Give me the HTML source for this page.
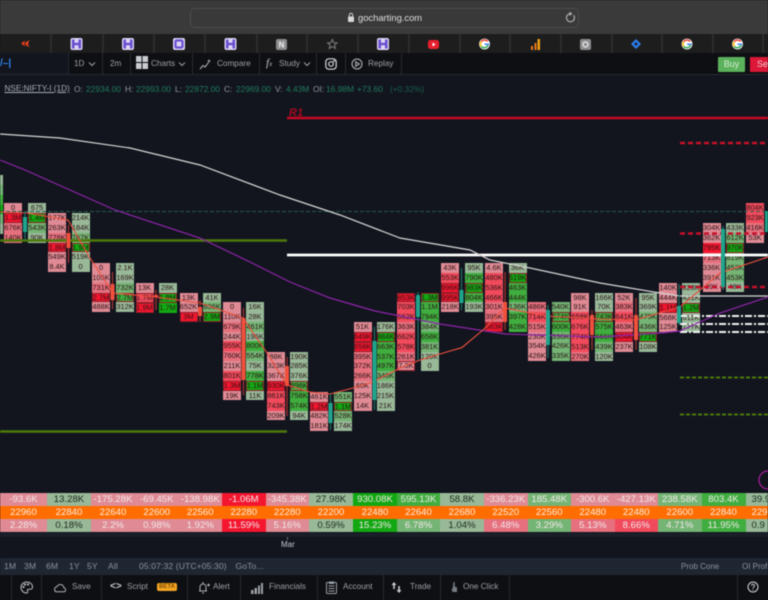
<!DOCTYPE html>
<html><head><meta charset="utf-8"><title>GoCharting</title>
<style>
html,body{margin:0;padding:0;background:#12151e}
#w{position:relative;width:768px;height:600px;overflow:hidden;background:#12151e;font-family:"Liberation Sans",sans-serif;filter:blur(.42px)}
.a{position:absolute;white-space:nowrap}
.c{position:absolute;width:18px}
.c i{display:block;height:9.85px;line-height:9.85px;font-style:normal;font-size:7.4px;text-align:center;color:#2a1414;box-sizing:border-box}
.r1{background:#df8a94}.r2{background:#e6707e}.r3{background:#f04a5c}.r4{background:#f4152f}
.g1{background:#98b898}.g2{background:#74b474}.g3{background:#3fae3f}.g4{background:#12a812}
.c i.b{box-shadow:inset 0 0 0 1px #8f1f2a}
.tab{position:absolute;top:34px;width:2px;height:19px;background:#2c2c2c}
.sep{position:absolute;top:53px;width:1px;height:22px;background:#272a31}
.sp2{position:absolute;top:575px;width:1px;height:25px;background:#272a31}
.t{font-size:8.2px;color:#9aa0a8;line-height:11px}
.b1{font-size:8.6px;color:#8c93a0;line-height:11px;letter-spacing:.1px}
.tc{position:absolute;height:13px;line-height:13px;font-size:9.6px;text-align:center;color:#f3e8ea;white-space:nowrap;overflow:hidden}
.d{color:#1c2a1c}
.o{background:#ff6d00;color:#fbeee2}
.gl,.gr{position:absolute;top:83px;line-height:12px;white-space:nowrap;font-size:8.4px}
.gl{color:#1f7a5c}
.gr{color:#8f959e}
</style></head><body><div id="w">

<!-- browser chrome -->
<div class="a" style="left:0;top:0;width:768px;height:34px;background:#3a3a3a"></div>
<div class="a" style="left:190px;top:8px;width:387px;height:18px;background:#393939;border:1px solid #4c4c4c;border-radius:5px"></div>
<svg class="a" style="left:347px;top:12px" width="8" height="11"><rect x="1" y="4.500" width="6" height="5.500" rx="1" fill="#d8d8d8"/><path d="M2.300 4.500V3a1.700 1.700 0 0 1 3.400 0v1.500" fill="none" stroke="#d8d8d8"/></svg>
<div class="a" style="left:358px;top:11px;font-size:9.4px;line-height:13px;color:#dedede">gocharting.com</div>
<svg class="a" style="left:565px;top:12px" width="11" height="11" fill="none" stroke="#bdbdbd" stroke-width="1"><path d="M8.600 3.200A4 4 0 1 1 5.500 1.700"/><path d="M4.500 0 6.500 1.700 4.500 3.400"/></svg>

<!-- tabs -->
<div class="a" style="left:0;top:34px;width:768px;height:19px;background:#1d1d1e"></div>
<div class="tab" style="left:50px"></div><div class="tab" style="left:102px"></div><div class="tab" style="left:153px"></div><div class="tab" style="left:204px"></div><div class="tab" style="left:256px"></div><div class="tab" style="left:306px"></div><div class="tab" style="left:357px"></div><div class="tab" style="left:408px"></div><div class="tab" style="left:459px"></div><div class="tab" style="left:509px"></div><div class="tab" style="left:560px"></div><div class="tab" style="left:611px"></div><div class="tab" style="left:661px"></div><div class="tab" style="left:712px"></div><div class="tab" style="left:762px"></div>
<svg class="a" style="left:0;top:34px" width="768" height="19">
<defs>
<g id="h"><rect x="-6" y="-6" width="12" height="12" rx="2" fill="#dcd6f4"/><path d="M-3.300-4.500V4.500M3.300-4.500V4.500M-3.300 0H3.300" stroke="#6a4fd0" stroke-width="2.600" fill="none"/></g>
<g id="gg"><circle r="5.400" fill="#fff"/><path d="M3.200-2.400A4 4 0 0 0-3.300-2.200" stroke="#ea4335" stroke-width="1.500" fill="none"/><path d="M-3.300-2.200A4 4 0 0 0-3.200 2.400" stroke="#fbbc05" stroke-width="1.500" fill="none"/><path d="M-3.200 2.400A4 4 0 0 0 3.600 1" stroke="#34a853" stroke-width="1.500" fill="none"/><path d="M0 .2H3.800V1.200" stroke="#4285f4" stroke-width="1.500" fill="none"/></g>
</defs>
<path d="M29.500 6 24 9.500l2 .5-1 .5 4.500 3-1.500-3.500z" fill="#e8401c"/><path d="M21 9.500l4-3-1 3 1 3z" fill="#e8401c"/>
<use href="#h" x="76.500" y="10"/><use href="#h" x="128" y="10"/>
<rect x="173" y="4" width="12" height="12" rx="2" fill="#dcd6f4"/><rect x="175.500" y="6.500" width="7" height="7" rx="1" fill="none" stroke="#6a4fd0" stroke-width="2.200"/>
<use href="#h" x="230.500" y="10"/>
<rect x="276" y="5" width="11" height="11" rx="2" fill="#8d8d8f"/><text x="281.500" y="13.500" font-size="8" font-weight="bold" text-anchor="middle" fill="#eee" font-family="Liberation Sans">N</text>
<path d="M332.300 5.500l1.400 3.100 3.300.3-2.500 2.200.8 3.300-3-1.800-3 1.800.8-3.300-2.500-2.200 3.300-.3z" fill="none" stroke="#7f7f7f"/>
<use href="#h" x="383" y="10"/>
<rect x="428" y="6" width="11" height="9" rx="2.500" fill="#e8202e"/><path d="M432.500 8.500v4l3-2z" fill="#fff"/>
<use href="#gg" x="484.500" y="10"/>
<rect x="531" y="12" width="2" height="4" fill="#e8781c"/><rect x="534.500" y="9" width="2" height="7" fill="#e8781c"/><rect x="537.500" y="5" width="2.500" height="11" fill="#f0a010"/>
<rect x="580" y="5" width="11" height="11" rx="2" fill="#8d8d8f"/><circle cx="585.500" cy="10.500" r="2.500" fill="none" stroke="#eee" stroke-width="1.200"/>
<path d="M636 5l5 5-5 5-5-5z" fill="#2f7fe8"/><path d="M636 8l2 2-2 2-2-2z" fill="#16254a"/>
<use href="#gg" x="687" y="10"/><use href="#gg" x="737.500" y="10"/>
</svg>

<!-- toolbar -->
<div class="a" style="left:0;top:53px;width:768px;height:22px;background:#0e0f12;border-bottom:1px solid #272a31;box-sizing:border-box"></div>
<div class="a" style="left:0;top:53px;width:68px;height:22px;background:#12151e;border-bottom:1px solid #272a31;box-sizing:border-box"></div>
<div class="a" style="left:0;top:57px;font-size:10px;font-weight:bold;color:#2f83f0;line-height:14px">/&#8211;|</div>
<div class="sep" style="left:68px"></div><div class="sep" style="left:102px"></div><div class="sep" style="left:130px"></div><div class="sep" style="left:192px"></div><div class="sep" style="left:259px"></div><div class="sep" style="left:316px"></div><div class="sep" style="left:345px"></div><div class="sep" style="left:401px"></div>
<div class="a t" style="left:74px;top:58px">1D</div>
<svg class="a" style="left:88px;top:61px" width="8" height="6" fill="none" stroke="#9aa0a8"><path d="M1 1.500 4 4.500 7 1.500"/></svg>
<div class="a t" style="left:110px;top:58px">2m</div>
<svg class="a" style="left:136px;top:56px" width="12" height="13" fill="#c9cdd2"><rect width="5.500" height="6"/><rect x="6.500" width="5.500" height="6"/><rect y="7" width="5.500" height="6"/><rect x="6.500" y="7" width="5.500" height="6"/></svg>
<div class="a t" style="left:151px;top:58px">Charts</div>
<svg class="a" style="left:178px;top:61px" width="8" height="6" fill="none" stroke="#9aa0a8"><path d="M1 1.500 4 4.500 7 1.500"/></svg>
<svg class="a" style="left:199px;top:59px" width="12" height="12" fill="none" stroke="#b8bcc2"><path d="M1 10 4 6.500 6 8 9.500 3.500"/><path d="M10 0.500v3M8.500 2h3" stroke-width=".8"/></svg>
<div class="a t" style="left:217px;top:58px">Compare</div>
<div class="a" style="left:266px;top:57px;font-family:'Liberation Serif',serif;font-style:italic;font-size:11px;color:#c0c4ca;line-height:13px">f<span style="font-size:7px">x</span></div>
<div class="a t" style="left:279px;top:58px">Study</div>
<svg class="a" style="left:303px;top:61px" width="8" height="6" fill="none" stroke="#9aa0a8"><path d="M1 1.500 4 4.500 7 1.500"/></svg>
<svg class="a" style="left:325px;top:58px" width="12" height="12" fill="none" stroke="#d5d7da" stroke-width="1.200"><rect x=".8" y=".8" width="10.400" height="10.400" rx="3"/><circle cx="6" cy="6" r="2.300"/><circle cx="9" cy="3" r=".4"/></svg>
<svg class="a" style="left:351px;top:58px" width="12" height="12" fill="none" stroke="#b8bcc2"><circle cx="6" cy="6" r="5"/><path d="M4.700 3.700v4.600L8.300 6z"/></svg>
<div class="a t" style="left:368px;top:58px">Replay</div>
<div class="a" style="left:718px;top:57px;width:27px;height:15px;border-radius:1px;background:#5cb25c;color:#d4ecd4;font-size:9px;line-height:15px;text-align:center">Buy</div>
<div class="a" style="left:750px;top:57px;width:18px;height:15px;background:#dc1838;color:#f2c8d0;font-size:9px;line-height:15px;overflow:hidden;padding-left:7px;box-sizing:border-box">Sell</div>

<!-- legend -->
<div class="a" style="left:4.500px;top:83px;font-size:8.200px;line-height:12px;color:#a8adb4;text-decoration:underline">NSE:NIFTY-I (1D)</div>
<span class="gr" style="left:74px">O:</span><span class="gl" style="left:86px">22934.00</span>
<span class="gr" style="left:125px">H:</span><span class="gl" style="left:136px">22993.00</span>
<span class="gr" style="left:175px">L:</span><span class="gl" style="left:185px">22872.00</span>
<span class="gr" style="left:224px">C:</span><span class="gl" style="left:236px">22969.00</span>
<span class="gr" style="left:275px">V:</span><span class="gl" style="left:286px">4.43M</span>
<span class="gr" style="left:313px">OI:</span><span class="gl" style="left:326px">16.98M</span>
<span class="gl" style="left:357px">+73.60</span><span class="gl" style="left:390px;color:#17604a">(+0.32%)</span>

<!-- cells -->
<div class="c" style="left:-15px;top:175px"><i class="g1"></i><i class="g2"></i><i class="g3"></i><i class="g4"></i><i class="g2"></i><i class="g1"></i></div>
<div class="c" style="left:4px;top:203.300px"><i class="r1">0</i><i class="r4 b">1.3M</i><i class="r2">676K</i><i class="r2">140K</i></div>
<div class="c" style="left:28px;top:203.300px"><i class="g1">675</i><i class="g4 b">1.4M</i><i class="g2">543K</i><i class="g1">90K</i></div>
<div class="c" style="left:48px;top:213px"><i class="r1">177K</i><i class="r1">263K</i><i class="r2">778K</i><i class="r4 b">1.8M</i><i class="r1">549K</i><i class="r1">8.4K</i></div>
<div class="c" style="left:71.500px;top:213px"><i class="g1">214K</i><i class="g1">184K</i><i class="g2">767K</i><i class="g4 b">1.9M</i><i class="g1">519K</i><i class="g1">0</i></div>
<div class="c" style="left:92px;top:263px"><i class="r1">0</i><i class="r1">105K</i><i class="r2">731K</i><i class="r4 b">2.7M</i><i class="r1">488K</i></div>
<div class="c" style="left:116px;top:263px"><i class="g1">2.1K</i><i class="g1">169K</i><i class="g2">732K</i><i class="g3 b">2.7M</i><i class="g1">312K</i></div>
<div class="c" style="left:135.500px;top:283px"><i class="r1">13K</i><i class="r3 b">1.7M</i><i class="r4 b">1.9M</i></div>
<div class="c" style="left:158.500px;top:283px"><i class="g1">28K</i><i class="g4 b">1.8M</i><i class="g4">1.7M</i></div>
<div class="c" style="left:179.500px;top:292.500px"><i class="r1">13K</i><i class="r1">652K</i><i class="r4 b">3M</i></div>
<div class="c" style="left:203px;top:292.500px"><i class="g1">41K</i><i class="g2">636K</i><i class="g4 b">2.9M</i></div>
<div class="c" style="left:223px;top:302px"><i class="r1">0</i><i class="r1">110K</i><i class="r2">679K</i><i class="r1">244K</i><i class="r3">955K</i><i class="r2">760K</i><i class="r1">211K</i><i class="r3">801K</i><i class="r4 b">1.3M</i><i class="r1">19K</i></div>
<div class="c" style="left:246px;top:302px"><i class="g1">16K</i><i class="g1">28K</i><i class="g2">461K</i><i class="g1">196K</i><i class="g3">800K</i><i class="g2">554K</i><i class="g1">75K</i><i class="g3">778K</i><i class="g4 b">1.1M</i><i class="g1">11K</i></div>
<div class="c" style="left:267px;top:351.500px"><i class="r1">88K</i><i class="r1">323K</i><i class="r1">367K</i><i class="r4 b">930K</i><i class="r3">861K</i><i class="r3">743K</i><i class="r1">209K</i></div>
<div class="c" style="left:290px;top:351.500px"><i class="g1">190K</i><i class="g1">285K</i><i class="g1">376K</i><i class="g3 b">898K</i><i class="g3">758K</i><i class="g3">574K</i><i class="g1">94K</i></div>
<div class="c" style="left:310px;top:391.700px"><i class="r1">461K</i><i class="r4 b">1.2M</i><i class="r1">482K</i><i class="r1">181K</i></div>
<div class="c" style="left:334px;top:391.700px"><i class="g2">551K</i><i class="g4 b">1.1M</i><i class="g2">528K</i><i class="g1">174K</i></div>
<div class="c" style="left:353.500px;top:322px"><i class="r1">51K</i><i class="r4 b">649K</i><i class="r4 b">658K</i><i class="r2">395K</i><i class="r2">372K</i><i class="r2">266K</i><i class="r1">60K</i><i class="r1">125K</i><i class="r1">14K</i></div>
<div class="c" style="left:376.500px;top:322px"><i class="g1">176K</i><i class="g4 b">884K</i><i class="g3">663K</i><i class="g3">537K</i><i class="g3">497K</i><i class="g2">346K</i><i class="g1">186K</i><i class="g1">215K</i><i class="g1">21K</i></div>
<div class="c" style="left:397px;top:292.500px"><i class="r4 b">853K</i><i class="r3">703K</i><i class="r3">662K</i><i class="r2">363K</i><i class="r3">662K</i><i class="r3">578K</i><i class="r2">261K</i><i class="r1 b">7.3K</i></div>
<div class="c" style="left:420.500px;top:292.500px"><i class="g4 b">1.3M</i><i class="g3">1.1M</i><i class="g3">794K</i><i class="g2">384K</i><i class="g3">658K</i><i class="g2">381K</i><i class="g1">129K</i><i class="g1">0</i></div>
<div class="c" style="left:441px;top:263px"><i class="r1">43K</i><i class="r3">553K</i><i class="r4 b">996K</i><i class="r4 b">995K</i><i class="r1">218K</i></div>
<div class="c" style="left:465px;top:263px"><i class="g1">95K</i><i class="g3">790K</i><i class="g4 b">983K</i><i class="g3">804K</i><i class="g1">193K</i></div>
<div class="c" style="left:485px;top:263px"><i class="r1">4.6K</i><i class="r3">480K</i><i class="r3">536K</i><i class="r3">466K</i><i class="r2">301K</i><i class="r2">395K</i><i class="r4 b">583K</i></div>
<div class="c" style="left:508.500px;top:263px"><i class="g1">36K</i><i class="g4 b">519K</i><i class="g3">463K</i><i class="g3">444K</i><i class="g2">136K</i><i class="g3">397K</i><i class="g3">428K</i></div>
<div class="c" style="left:528px;top:302px"><i class="r2">486K</i><i class="r3">714K</i><i class="r2">515K</i><i class="r1">230K</i><i class="r1">354K</i><i class="r1">426K</i></div>
<div class="c" style="left:551.500px;top:302px"><i class="g2">540K</i><i class="g3 b">674K</i><i class="g3">600K</i><i class="g2">336K</i><i class="g2">426K</i><i class="g2">335K</i></div>
<div class="c" style="left:571px;top:292.500px"><i class="r1">98K</i><i class="r1">91K</i><i class="r3">658K</i><i class="r3">676K</i><i class="r3">774K</i><i class="r3">513K</i><i class="r2">270K</i></div>
<div class="c" style="left:595px;top:292.500px"><i class="g1">166K</i><i class="g1">70K</i><i class="g3 b">743K</i><i class="g3">575K</i><i class="g3">666K</i><i class="g2">439K</i><i class="g1">120K</i></div>
<div class="c" style="left:615px;top:292.500px"><i class="r1">52K</i><i class="r2">383K</i><i class="r3">641K</i><i class="r2">463K</i><i class="r4 b">904K</i><i class="r1">237K</i></div>
<div class="c" style="left:639px;top:292.500px"><i class="g1">95K</i><i class="g1">369K</i><i class="g2">475K</i><i class="g2">436K</i><i class="g4 b">771K</i><i class="g1">108K</i></div>
<div class="c" style="left:659px;top:283px"><i class="r1">140K</i><i class="r1">444K</i><i class="r4 b">1.1M</i><i class="r1">568K</i><i class="r1">125K</i></div>
<div class="c" style="left:682px;top:283px"><i class="g1">328K</i><i class="g1">421K</i><i class="g4 b">1.2M</i><i class="g1">611K</i><i class="g1">777K</i></div>
<div class="c" style="left:702.500px;top:223.300px"><i class="r1">304K</i><i class="r1">362K</i><i class="r4">795K</i><i class="r2">713K</i><i class="r1">336K</i><i class="r1">391K</i><i class="r1">89K</i></div>
<div class="c" style="left:726px;top:223.300px"><i class="g1">433K</i><i class="g2">612K</i><i class="g4 b">970K</i><i class="g2">819K</i><i class="g2">453K</i><i class="g2">453K</i><i class="g1">48K</i></div>
<div class="c" style="left:746px;top:203.300px"><i class="r3">804K</i><i class="r3">923K</i><i class="r2">416K</i><i class="r1">53K</i></div>

<!-- chart overlay -->
<svg class="a" style="left:0;top:0" width="768" height="600">
<g fill="none">
<path d="M0 211.500H768" stroke="#245c50" stroke-dasharray="4 2"/>
<path d="M287 118H768" stroke="#c80a24" stroke-width="2.600"/>
<path d="M0 240.500H287" stroke="#4d7a0a" stroke-width="2.600"/>
<path d="M0 431.500H287" stroke="#4d7a0a" stroke-width="2.600"/>
<path d="M287 255H768" stroke="#fff" stroke-width="2.800"/>
<path d="M680 143H768M680 233.500H768M680 287H768" stroke="#c80f2c" stroke-width="2.400" stroke-dasharray="5 3"/>
<path d="M680 316H768M680 324H768M680 332H768" stroke="#f2f2f2" stroke-width="2" stroke-dasharray="7 2 2 2"/>
<path d="M680 377.500H768M680 414.500H768" stroke="#4d7a0a" stroke-width="2" stroke-dasharray="4 2"/>
<path d="M0 134 60 138 130 148 200 165 280 195 340 215 400 238 470 250 490 260 530 268 600 283 660 293 680 296H768" stroke="#d6d6d6" stroke-width="1.200"/>
<path d="M0 160 25 170 115 210 200 238 250 262 290 282 330 298 375 311 440 324 505 334 600 337 660 333 680 331 720 313 768 297" stroke="#8e24aa" stroke-width="1.200"/>
<path d="M0 212 27 213 68 220 90 258 113 293 155 297 200 303 243 318 267 353 287 385 310 392 330 394 353 388 373 382 400 368 420 360 450 351 461.700 347.700 483 330 505 308 546 316 600 319 635 320 680 307 720 273 768 257" stroke="#f0503c" stroke-width="1.100"/>
</g>
<!-- wicks -->
<g stroke-width="1.200">
<path d="M25 212V240M330.500 394V430M374.500 327V410M418 292V360M461.500 268V310M548 305V358M679 284V325M723 226V290" stroke="#1f6f62"/>
<path d="M68.500 225V263M112.500 272V309M156 290V310M200 300V322M243.500 308V395M287 357V416M505 272V330M592 310V350M636 298V350" stroke="#a83230"/>
</g>
<!-- candle bodies -->
<g fill="#1fa58c">
<rect x="23" y="217" width="4" height="15"/><rect x="328.500" y="403" width="4" height="20"/><rect x="372.500" y="341" width="4" height="59"/><rect x="416" y="295" width="4" height="22"/><rect x="459.500" y="290" width="4" height="13"/><rect x="546" y="310" width="4" height="35"/><rect x="677" y="306" width="4" height="17"/><rect x="721" y="229" width="4" height="58"/><rect x="765" y="211" width="4" height="21"/>
</g>
<g fill="#f0503c">
<rect x="66.500" y="233" width="4" height="15"/><rect x="110.500" y="284" width="4" height="16"/><rect x="154" y="295" width="4" height="2"/><rect x="198" y="307" width="4" height="9"/><rect x="241.500" y="318" width="4" height="62"/><rect x="285" y="366" width="4" height="20"/><rect x="503" y="302" width="4" height="20"/><rect x="590" y="315" width="4" height="20"/><rect x="634" y="315" width="4" height="25"/>
</g>
<circle cx="768" cy="480" r="9" fill="none" stroke="#b01ca0" stroke-width="1.200"/>
<circle cx="766" cy="506" r="3" fill="#6a6a6a"/>
</svg>
<div class="a" style="left:289px;top:107px;font-size:11px;line-height:13px;font-weight:bold;font-style:italic;color:#a80a20">R1</div>

<!-- bottom table -->
<div class="a" style="left:0;top:493px;width:768px;height:39px;background:#ff6d00"></div>
<div class="tc r1" style="left:0;top:493px;width:47px">-93.6K</div><div class="tc g1 d" style="left:47px;top:493px;width:44px">13.28K</div><div class="tc r1" style="left:91px;top:493px;width:44px">-175.28K</div><div class="tc r1" style="left:135px;top:493px;width:43.500px">-69.45K</div><div class="tc r1" style="left:178.500px;top:493px;width:43.500px">-138.98K</div><div class="tc r4" style="left:222px;top:493px;width:43.500px">-1.06M</div><div class="tc r1" style="left:265.500px;top:493px;width:43.500px">-345.38K</div><div class="tc g1 d" style="left:309px;top:493px;width:44px">27.98K</div><div class="tc g4" style="left:353px;top:493px;width:44px">930.08K</div><div class="tc g3" style="left:397px;top:493px;width:43px">595.13K</div><div class="tc g1 d" style="left:440px;top:493px;width:44px">58.8K</div><div class="tc r1" style="left:484px;top:493px;width:43.500px">-336.23K</div><div class="tc g2" style="left:527.500px;top:493px;width:43.500px">185.48K</div><div class="tc r1" style="left:571px;top:493px;width:43.500px">-300.6K</div><div class="tc r1" style="left:614.500px;top:493px;width:43.500px">-427.13K</div><div class="tc g2" style="left:658px;top:493px;width:43.500px">238.58K</div><div class="tc g3" style="left:701.500px;top:493px;width:44px">803.4K</div><div class="tc g1 d" style="left:745.500px;top:493px;width:23px;text-align:left;padding-left:6px;box-sizing:border-box">39.9</div>
<div class="tc o" style="left:0;top:506px;width:47px">22960</div><div class="tc o" style="left:47px;top:506px;width:44px">22840</div><div class="tc o" style="left:91px;top:506px;width:44px">22640</div><div class="tc o" style="left:135px;top:506px;width:43.500px">22600</div><div class="tc o" style="left:178.500px;top:506px;width:43.500px">22560</div><div class="tc o" style="left:222px;top:506px;width:43.500px">22280</div><div class="tc o" style="left:265.500px;top:506px;width:43.500px">22280</div><div class="tc o" style="left:309px;top:506px;width:44px">22200</div><div class="tc o" style="left:353px;top:506px;width:44px">22480</div><div class="tc o" style="left:397px;top:506px;width:43px">22640</div><div class="tc o" style="left:440px;top:506px;width:44px">22680</div><div class="tc o" style="left:484px;top:506px;width:43.500px">22520</div><div class="tc o" style="left:527.500px;top:506px;width:43.500px">22560</div><div class="tc o" style="left:571px;top:506px;width:43.500px">22480</div><div class="tc o" style="left:614.500px;top:506px;width:43.500px">22480</div><div class="tc o" style="left:658px;top:506px;width:43.500px">22600</div><div class="tc o" style="left:701.500px;top:506px;width:44px">22840</div><div class="tc o" style="left:745.500px;top:506px;width:23px;text-align:left;padding-left:6px;box-sizing:border-box">229</div>
<div class="tc r1" style="left:0;top:519px;width:47px">2.28%</div><div class="tc g1 d" style="left:47px;top:519px;width:44px">0.18%</div><div class="tc r1" style="left:91px;top:519px;width:44px">2.2%</div><div class="tc r1" style="left:135px;top:519px;width:43.500px">0.98%</div><div class="tc r1" style="left:178.500px;top:519px;width:43.500px">1.92%</div><div class="tc r4" style="left:222px;top:519px;width:43.500px">11.59%</div><div class="tc r1" style="left:265.500px;top:519px;width:43.500px">5.16%</div><div class="tc g1 d" style="left:309px;top:519px;width:44px">0.59%</div><div class="tc g4" style="left:353px;top:519px;width:44px">15.23%</div><div class="tc g2" style="left:397px;top:519px;width:43px">6.78%</div><div class="tc g1 d" style="left:440px;top:519px;width:44px">1.04%</div><div class="tc r2" style="left:484px;top:519px;width:43.500px">6.48%</div><div class="tc g2" style="left:527.500px;top:519px;width:43.500px">3.29%</div><div class="tc r2" style="left:571px;top:519px;width:43.500px">5.13%</div><div class="tc r3" style="left:614.500px;top:519px;width:43.500px">8.66%</div><div class="tc g2" style="left:658px;top:519px;width:43.500px">4.71%</div><div class="tc g3" style="left:701.500px;top:519px;width:44px">11.95%</div><div class="tc g1 d" style="left:745.500px;top:519px;width:23px;text-align:left;padding-left:6px;box-sizing:border-box">0.9</div>
<div class="a" style="left:0;top:533px;width:768px;height:4px;background:#1a1e28"></div>

<!-- axis -->
<div class="a" style="left:287px;top:537px;width:1px;height:3px;background:#6a707a"></div>
<div class="a" style="left:281px;top:539px;font-size:8px;line-height:11px;color:#c4c8ce">Mar</div>

<!-- range bar -->
<div class="a" style="left:0;top:558px;width:768px;height:17px;background:#1f2632"></div>
<div class="a b1" style="left:4px;top:561px">1M</div><div class="a b1" style="left:24px;top:561px">3M</div><div class="a b1" style="left:46px;top:561px">6M</div><div class="a b1" style="left:69px;top:561px">1Y</div><div class="a b1" style="left:87px;top:561px">5Y</div><div class="a b1" style="left:108px;top:561px">All</div>
<div class="a b1" style="left:139px;top:561px">05:07:32 (UTC+05:30)</div><div class="a b1" style="left:235.500px;top:561px">GoTo...</div>
<div class="a b1" style="left:681px;top:561px;font-size:8px;letter-spacing:0">Prob Cone</div><div class="a b1" style="left:742px;top:561px;font-size:8px;letter-spacing:0">OI Profile</div>

<!-- bottom bar -->
<div class="a" style="left:0;top:575px;width:768px;height:25px;background:#0e0f12"></div>
<div class="sp2" style="left:11px"></div><div class="sp2" style="left:41px"></div><div class="sp2" style="left:101px"></div><div class="sp2" style="left:187px"></div><div class="sp2" style="left:240px"></div><div class="sp2" style="left:317px"></div><div class="sp2" style="left:383px"></div><div class="sp2" style="left:440px"></div><div class="sp2" style="left:509px"></div><div class="sp2" style="left:737px"></div>
<svg class="a" style="left:20px;top:581px" width="13" height="13" fill="none" stroke="#b8bcc2"><path d="M6.500 1a5.500 5.500 0 1 0 0 11c1.500 0 1.500-1.200 1-2s0-1.800 1.200-1.800H10.500c1.200 0 2-1 2-2.200C12.500 3 10 1 6.500 1z"/><circle cx="3.500" cy="6" r=".6"/><circle cx="5" cy="3.500" r=".6"/><circle cx="8" cy="3.500" r=".6"/></svg>
<svg class="a" style="left:53px;top:583px" width="13" height="10" fill="none" stroke="#aeb2b8"><path d="M3.200 8.800H10.500a2 2 0 0 0 .3-4A3.500 3.500 0 0 0 4 3.800a2.600 2.600 0 0 0-.8 5z"/></svg>
<div class="a t" style="left:72px;top:581px">Save</div>
<div class="a" style="left:110px;top:580px;font-size:10px;line-height:13px;color:#c8ccd0;font-weight:bold">&lt;&gt;</div>
<div class="a t" style="left:127px;top:581px">Script</div>
<div class="a" style="left:157px;top:583px;width:20px;height:8px;border-radius:2px;background:#f5a623;color:#7a4e00;font-size:6px;font-weight:bold;line-height:8px;text-align:center">BETA</div>
<svg class="a" style="left:197px;top:581px" width="13" height="13" fill="none" stroke="#aeb2b8"><path d="M2 10h8M3 10V6a3 3 0 0 1 6 0v4M6 1v2M5 12h2M10 4h3M11.500 2.500v3"/></svg>
<div class="a t" style="left:213px;top:581px">Alert</div>
<svg class="a" style="left:251px;top:582px" width="12" height="12" fill="#9aa0a8"><rect x="0" y="8" width="2.500" height="4"/><rect x="3.500" y="6" width="2.500" height="6"/><rect x="7" y="3.500" width="2" height="8.500"/><rect x="10" y="1" width="2" height="11"/></svg>
<div class="a t" style="left:269px;top:581px">Financials</div>
<svg class="a" style="left:326px;top:581px" width="11" height="13" fill="none" stroke="#9aa0a8"><rect x=".5" y="1.500" width="10" height="11" rx="1"/><path d="M3.500 1h4v1.500h-4zM2.500 5h6M2.500 7.500h6M2.500 10h6"/></svg>
<div class="a t" style="left:343px;top:581px">Account</div>
<svg class="a" style="left:391px;top:581px" width="13" height="13" fill="#c8ccd0"><path d="M3 1 .5 4H2.200V8H3.800V4H5.500zM8 12l2.500-3H8.800V5H7.200V9H5.500z"/></svg>
<div class="a t" style="left:410px;top:581px">Trade</div>
<svg class="a" style="left:451px;top:581px" width="7" height="12" fill="#767b82"><path d="M2.500 1h1.200v4.500L6 6.500V11H1.500L.5 7.500l1 .5z"/></svg>
<div class="a t" style="left:463px;top:581px">One Click</div>
<svg class="a" style="left:747px;top:581px" width="12" height="12" fill="none" stroke="#d0d3d7"><circle cx="6" cy="6" r="5"/><path d="M4.500 4.700a1.500 1.500 0 1 1 2.300 1.300c-.5.300-.8.600-.8 1.200M6 8.200v1"/></svg>

</div></body></html>
